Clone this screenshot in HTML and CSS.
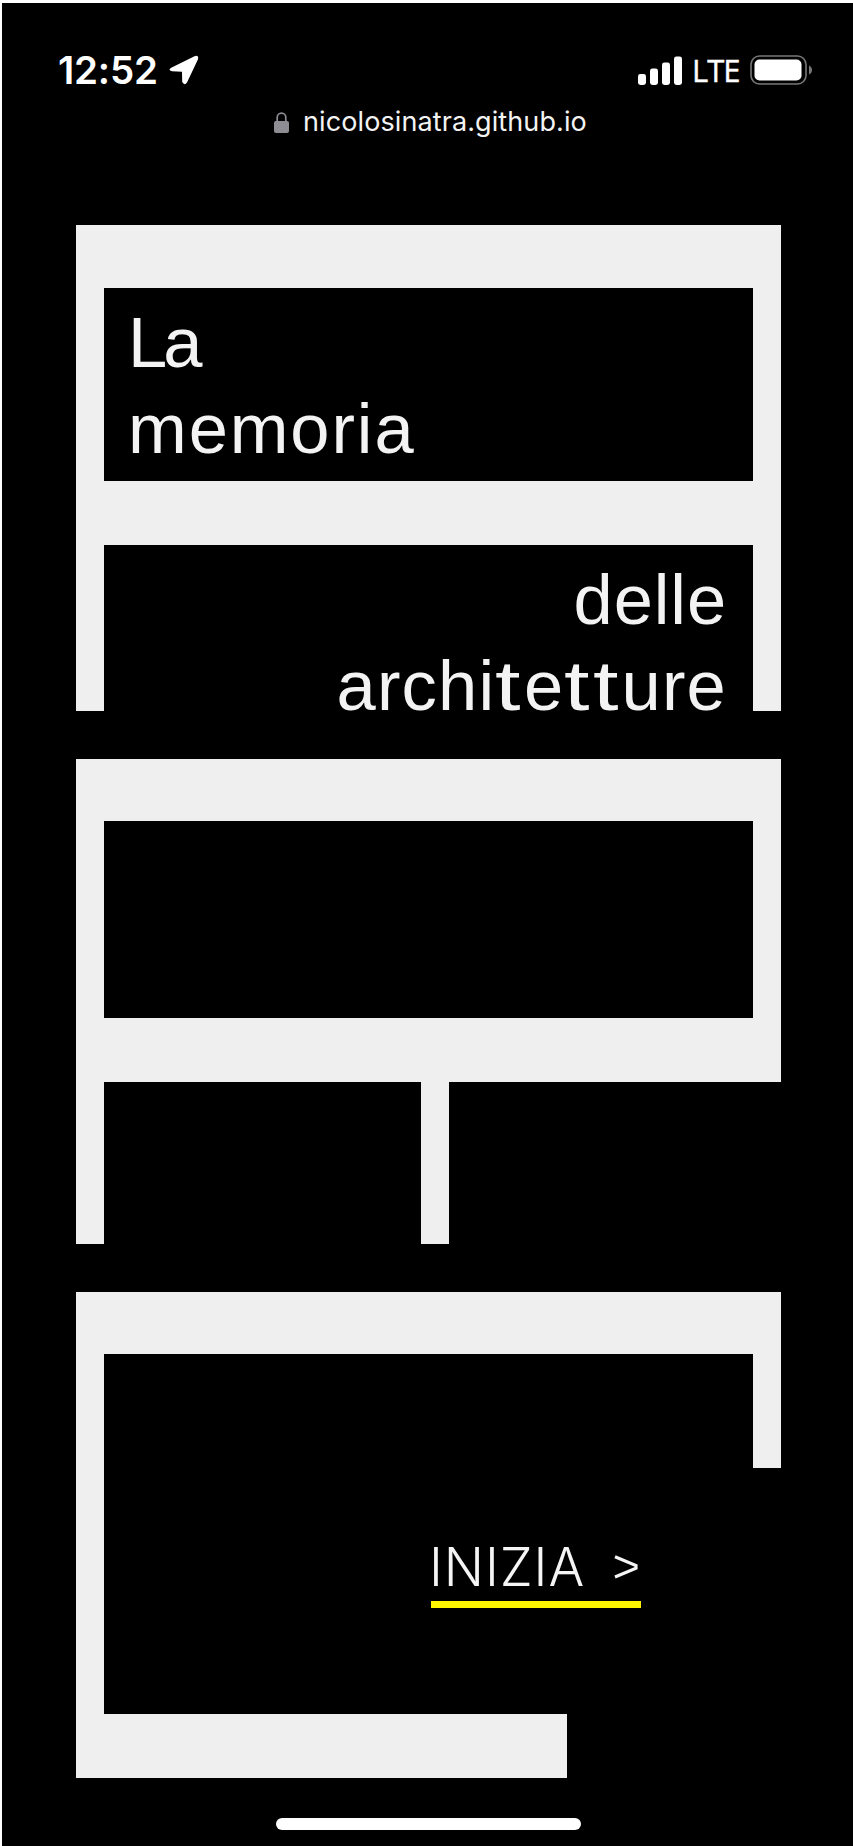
FILE: index.html
```html
<!DOCTYPE html>
<html lang="it">
<head>
<meta charset="utf-8">
<title>La memoria delle architetture</title>
<link rel="stylesheet" href="styles.css">
</head>
<body>
<header class="status">
  <div class="status-side">
    <span class="time">12:52</span>
    <svg class="location" width="32" height="32" viewBox="0 0 32 32"><path d="M3.2 13.8 26.5 2.2Q31 .8 30 5.2L19 28.5Q16.500 32 14.200 28L14 17.700 4 17.200Q-.6 16 3.200 13.800Z" fill="#fff"/></svg>
  </div>
  <div class="status-side">
    <svg width="45" height="29" viewBox="0 0 45 29" fill="#fff"><rect y="18" width="8" height="11" rx="2.400"/><rect x="12" y="12.500" width="8" height="16.500" rx="2.400"/><rect x="24" y="6.500" width="8" height="22.500" rx="2.400"/><rect x="36" y="0.500" width="8" height="28.500" rx="2.400"/></svg>
    <span class="network">LTE</span>
    <svg class="battery" width="63" height="30" viewBox="0 0 63 30"><rect x="1" y="1" width="55" height="28" rx="8.500" fill="none" stroke="#777" stroke-width="1.600"/><rect x="4.500" y="4.500" width="47" height="21" rx="5" fill="#fff"/><path d="M59 10.500Q62 12 62 15T59 19.500Z" fill="#777"/></svg>
  </div>
</header>
<div class="address">
  <svg width="15" height="21" viewBox="0 0 15 21"><path d="M3.200 10V5.500a4.300 4.300 0 0 1 8.600 0V10" fill="none" stroke="#8e8d93" stroke-width="1.700"/><rect x="0" y="9" width="15" height="12" rx="2" fill="#8e8d93"/></svg>
  <span class="url">nicolosinatra.github.io</span>
</div>
<main class="letters">
  <h1 class="letter">
    <span class="room room-top">
      <span class="word la">La</span>
      <span class="word memoria">memoria</span>
    </span>
    <span class="room room-open">
      <span class="word delle">delle</span>
      <span class="word arch">archi<span class="wide">t</span>e<span class="wide">t</span><span class="wide">t</span>ure</span>
    </span>
  </h1>
  <section class="letter">
    <div class="room room-closed"></div>
    <div class="legs"><i class="leg"></i><i class="leg"></i></div>
  </section>
  <section class="letter last">
    <div class="roof"></div>
    <div class="hall">
      <i class="leg"></i>
      <a class="start" href="#"><span class="start-label">INIZIA</span><svg width="25" height="24" viewBox="0 0 25 24"><path d="M1 1.800 22 10.500V13.300L1 22" fill="none" stroke="#f5f5f5" stroke-width="3.200"/></svg></a>
      <i class="leg stub"></i>
    </div>
    <div class="base"></div>
  </section>
</main>
<div class="home"></div>
</body>
</html>
```
FILE: styles.css
```css
* { box-sizing: border-box; }
body {
  margin: 0;
  height: 1846px;
  border-top: 3px solid #fff;
  border-left: 2px solid #fff;
  background: #000;
  color: #f3f3f3;
  font-family: Inter, sans-serif;
  overflow: hidden;
}
svg { display: block; flex: none; }
.status {
  display: flex;
  justify-content: space-between;
  align-items: center;
  height: 68px;
  margin-top: 33px;
  padding: 0 40px 0 56px;
  color: #fff;
}
.status-side { display: flex; align-items: center; }
.time { width: 110px; font-size: 38.500px; font-weight: 600; letter-spacing: -.2px; white-space: nowrap; }
.network { flex: none; width: 67px; padding: 0 0 1px 9px; font: 500 31px/30px "Open Sans", sans-serif; letter-spacing: -1px; -webkit-text-stroke: .4px #fff; }
.address {
  display: flex;
  align-items: center;
  height: 34px;
  margin-top: 1px;
  padding-left: 272px;
}
.url { margin-left: 14px; font-size: 27px; line-height: 34px; letter-spacing: .1px; }
.letters { width: 705px; margin: 86px 0 0 74px; }
.letter {
  --wall: #efefef;
  display: block;
  height: 486px;
  margin: 0 0 48px;
  font-weight: 400;
}
.room {
  display: block;
  border: solid var(--wall);
  border-width: 63px 28px 0;
}
.room-top { height: 256px; padding: 12px 0 0 24px; }
.room-open { height: 230px; border-top-width: 64px; padding: 12px 26px 0 0; }
.room-open .word { margin-left: auto; }
.word {
  display: block;
  width: max-content;
  height: 86px;
  font: 400 70.500px/86px "Liberation Sans", Arial, sans-serif;
  white-space: nowrap;
}
.la { letter-spacing: -4px; }
.memoria { letter-spacing: 1.900px; }
.delle { letter-spacing: .9px; }
.arch { letter-spacing: 1.200px; }
.wide { display: inline-block; margin-right: 7px; letter-spacing: 2px; transform: scaleX(1.3); transform-origin: 0 0; }
.letter + .letter { height: 485px; }
.letters .last { margin-bottom: 0; }
.room-closed { height: 323px; border-top-width: 62px; border-bottom-width: 64px; }
.legs { display: grid; grid-template-columns: 345px 1fr; height: 162px; }
.leg { display: block; width: 28px; background: var(--wall); }
.roof { height: 62px; background: var(--wall); }
.hall { display: flex; justify-content: space-between; height: 360px; }
.stub { height: 114px; }
.base { width: 491px; height: 64px; background: var(--wall); }
.start {
  display: flex;
  align-items: center;
  justify-content: space-between;
  width: 210px;
  height: 75px;
  margin: 179px 112px 0 0;
  padding: 0 2px 0 0;
  border-bottom: 7px solid #fff500;
  color: #f5f5f5;
  text-decoration: none;
}
.hall .start { margin-left: auto; }
.start-label { margin-left: -2px; font-size: 53px; font-weight: 300; line-height: 68px; letter-spacing: .9px; }
.home { width: 305px; height: 12px; margin: 41px 0 0 274px; border-radius: 6px; background: #fff; }
```
